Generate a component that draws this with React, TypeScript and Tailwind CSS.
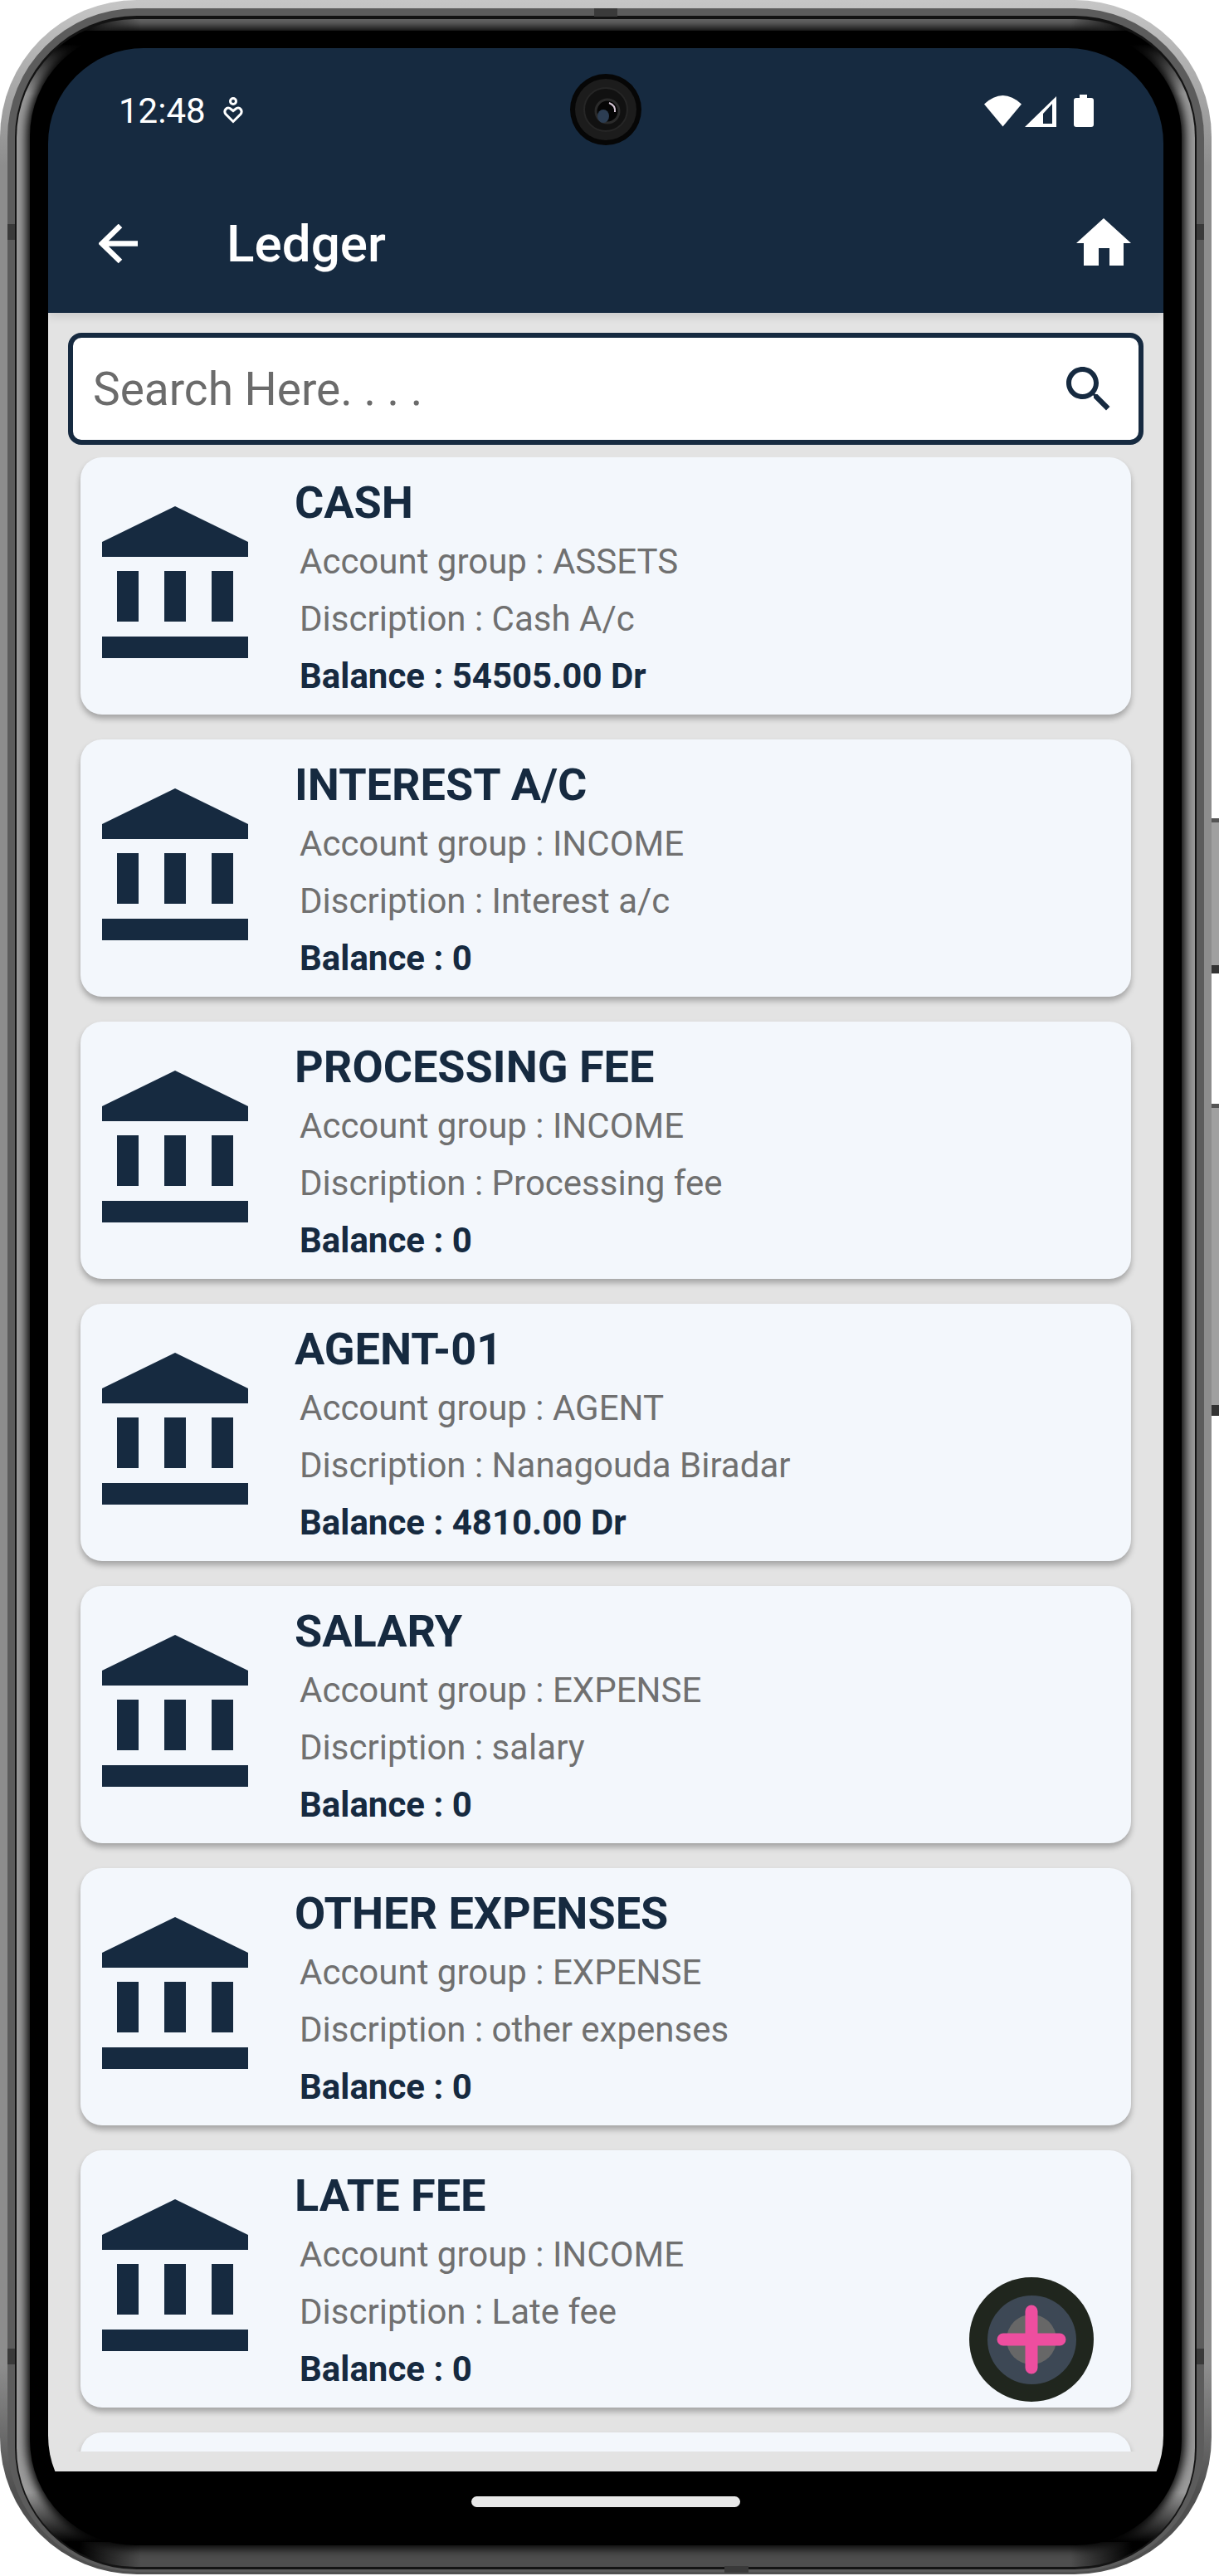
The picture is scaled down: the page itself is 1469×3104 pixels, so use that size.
const ACCOUNTS = [
  { name: 'CASH', group: 'ASSETS', description: 'Cash A/c', balance: '54505.00 Dr' },
  { name: 'INTEREST A/C', group: 'INCOME', description: 'Interest a/c', balance: '0' },
  { name: 'PROCESSING FEE', group: 'INCOME', description: 'Processing fee', balance: '0' },
  { name: 'AGENT-01', group: 'AGENT', description: 'Nanagouda Biradar', balance: '4810.00 Dr' },
  { name: 'SALARY', group: 'EXPENSE', description: 'salary', balance: '0' },
  { name: 'OTHER EXPENSES', group: 'EXPENSE', description: 'other expenses', balance: '0' },
  { name: 'LATE FEE', group: 'INCOME', description: 'Late fee', balance: '0' },
];

function BankIcon() {
  return (
    <svg width="176" height="183" viewBox="0 0 176 183" fill="#162a40">
      <path d="M88 0 176 43V61H0V43Z" />
      <rect x="18" y="78" width="26" height="61" />
      <rect x="75" y="78" width="26" height="61" />
      <rect x="132" y="78" width="26" height="61" />
      <rect x="0" y="157" width="176" height="26" />
    </svg>
  );
}

function AccountCard({ account }: { account?: (typeof ACCOUNTS)[number] }) {
  return (
    <div className="flex h-[310px] shrink-0 rounded-[26px] bg-[#f3f7fc] shadow-[0_5px_7px_rgba(0,0,0,0.28)]">
      {account && (
        <>
          <div className="w-[258px] shrink-0 pl-[26px] pt-[59px]">
            <BankIcon />
          </div>
          <div className="pt-[20px]">
            <div className="flex h-[71px] items-center pb-[2px] text-[54px] font-bold text-[#162a40]">{account.name}</div>
            <div className="flex h-[69px] items-center pl-[6px] text-[42px] text-[#707070]">Account group : {account.group}</div>
            <div className="flex h-[69px] items-center pl-[6px] text-[42px] text-[#707070]">Discription : {account.description}</div>
            <div className="flex h-[69px] items-center pl-[6px] text-[42px] font-bold text-[#162a40]">Balance : {account.balance}</div>
          </div>
        </>
      )}
    </div>
  );
}

function StatusBar() {
  return (
    <div className="flex h-[114px] items-center justify-between pl-[85px] pr-[84px] pt-[36px]">
      <div className="flex items-center gap-[21px]">
        <span className="text-[42px] text-white">12:48</span>
        <svg width="24" height="32" viewBox="0 0 24 32" fill="none" stroke="#fff" strokeWidth="3">
          <circle cx="12" cy="5" r="3.5" />
          <path d="M12 29.5 3 20.5C0 16.5 4 11.5 8 13.5L12 16.5 16 13.5C20 11.5 24 16.5 21 20.5Z" />
        </svg>
      </div>
      <div className="flex items-end gap-[4px]">
        <svg width="45" height="38" viewBox="0 0 45 38" fill="#fff">
          <path d="M0 10.5Q22.5-10.5 45 10.5L22.5 37.5Z" />
        </svg>
        <svg width="38" height="37" viewBox="0 0 38 37" fill="#fff" fillRule="evenodd" className="mr-[17px]">
          <path d="M0 37 38 0V37ZM22 21 33 9V33H22Z" />
        </svg>
        <svg width="24" height="39" viewBox="0 0 24 39" fill="#fff">
          <path d="M7 0H16V4H21Q24 4 24 7V36Q24 39 21 39H3Q0 39 0 36V7Q0 4 3 4H7Z" />
        </svg>
      </div>
    </div>
  );
}

function AppBar() {
  return (
    <div className="flex h-[205px] items-start pl-[61px] pr-[39px] pt-[76px]">
      <svg width="48" height="48" viewBox="0 0 48 48" fill="none" stroke="#fff" strokeWidth="6.5" className="mt-[22px]">
        <path d="M47 23.5H5M26 2 4 23.5 26 45" />
      </svg>
      <div className="ml-[106px] flex-1 text-[62px] font-medium leading-[92px] text-white">Ledger</div>
      <svg width="66" height="57" viewBox="0 0 66 57" fill="#fff" className="mt-[15px]">
        <path d="M33 0 66 30H57V57H40V36H27V57H9V30H0Z" />
      </svg>
    </div>
  );
}

function Camera() {
  return (
    <svg width="88" height="88" viewBox="0 0 88 88" className="absolute left-[628px] top-[30px]">
      <circle cx="44" cy="44" r="43" fill="#060606" />
      <circle cx="44" cy="44" r="37" fill="#1c1c1c" />
      <circle cx="44" cy="44" r="26" fill="#111" stroke="#262626" strokeWidth="2" />
      <circle cx="46" cy="46" r="14" fill="#050505" stroke="#2a2a2a" strokeWidth="3" />
      <ellipse cx="41" cy="52" rx="7" ry="8" fill="#2c3d52" />
      <path d="M48 36Q56 39 55 47" fill="none" stroke="#d8c8d8" strokeWidth="2" />
    </svg>
  );
}

function AddButton() {
  return (
    <div className="absolute bottom-[84px] right-[84px] flex h-[150px] w-[150px] items-center justify-center rounded-full bg-[#20261e]">
      <div className="flex h-[107px] w-[107px] items-center justify-center rounded-full bg-[#3d4855]">
        <div className="relative flex h-[60px] w-[60px] items-center justify-center rounded-full bg-[#676767]">
          <svg width="84" height="84" viewBox="0 0 84 84" className="absolute" stroke="#ee4e9f" strokeWidth="15" strokeLinecap="round">
            <path d="M42 8V76M8 42H76" />
          </svg>
        </div>
      </div>
    </div>
  );
}

function Screen() {
  return (
    <div className="relative flex h-[2992px] w-[1344px] flex-col overflow-hidden rounded-[115px] bg-black">
      <div className="relative z-10 h-[319px] shrink-0 bg-[#162a40] shadow-[0_5px_10px_rgba(0,0,0,0.1)]">
        <StatusBar />
        <AppBar />
      </div>
      <div className="absolute inset-x-0 top-0 z-20">
        <Camera />
      </div>
      <div className="relative flex h-[2601px] shrink-0 flex-col bg-[#e3e3e3]">
        <div className="mx-[24px] mt-[24px] flex h-[135px] shrink-0 items-center justify-between rounded-[16px] border-[6px] border-[#162a40] bg-white pl-[24px] pr-[24px]">
          <span className="pt-[2px] text-[55px] text-[#6b6b6b]">Search Here. . . .</span>
          <svg width="72" height="72" viewBox="0 0 24 24" fill="#162a40">
            <path d="M15.5 14h-.79l-.28-.27C15.41 12.59 16 11.11 16 9.5 16 5.91 13.09 3 9.5 3S3 5.91 3 9.5 5.91 16 9.5 16c1.61 0 3.09-.59 4.23-1.57l.27.28v.79l5 4.99L20.49 19l-4.99-5zm-6 0C7.01 14 5 11.99 5 9.5S7.01 5 9.5 5 14 7.01 14 9.5 11.99 14 9.5 14z" />
          </svg>
        </div>
        <div className="mb-[24px] mt-[15px] flex flex-1 flex-col gap-[30px] overflow-hidden px-[39px]">
          {ACCOUNTS.map((account) => (
            <AccountCard key={account.name} account={account} />
          ))}
          <AccountCard />
        </div>
        <AddButton />
      </div>
      <div className="flex flex-1 justify-center pt-[30px]">
        <div className="h-[13px] w-[324px] rounded-full bg-[#e8e8e8]" />
      </div>
    </div>
  );
}

function Antenna({ className }: { className: string }) {
  return <div className={`absolute bg-[#3a3a3a] ${className}`} />;
}

export default function App() {
  return (
    <div className="flex h-[3104px] w-[1469px] overflow-hidden bg-white [font-family:Roboto,sans-serif]">
      <div className="relative h-[3102px] w-[1460px] shrink-0 rounded-[165px] bg-[linear-gradient(180deg,#c6c6c6_0px,#8d8d8d_200px,#8d8d8d_2850px,#505050_3000px)] px-[9px] pb-[3px] pt-[10px]">
        <div className="h-full rounded-[156px] bg-[#5c5c5c] px-[9px] pb-[3px] pt-[9px]">
          <div className="h-full rounded-[147px] bg-[#141414] px-[2px] pb-[3px] pt-[4px]">
            <div className="h-full rounded-[143px] px-[16px] pb-[26px] pt-[14px] [background:linear-gradient(90deg,#000_75px,#666_150px,#666_calc(100%-150px),#000_calc(100%-75px))_top/100%_14px_no-repeat,linear-gradient(90deg,#000_75px,#4e4e4e_150px,#4e4e4e_calc(100%-150px),#000_calc(100%-75px))_bottom/100%_30px_no-repeat,linear-gradient(180deg,#000_30px,#9a9a9a_90px,#9a9a9a_calc(100%-90px),#000_calc(100%-30px))]">
              <div className="flex h-full justify-center rounded-[127px] bg-black pt-[21px] shadow-[0_0_12px_4px_#000]">
                <Screen />
              </div>
            </div>
          </div>
        </div>
        <Antenna className="left-[9px] top-[270px] h-[19px] w-[9px]" />
        <Antenna className="right-[9px] top-[270px] h-[19px] w-[9px]" />
        <Antenna className="left-[9px] top-[2830px] h-[19px] w-[9px]" />
        <Antenna className="right-[9px] top-[2830px] h-[19px] w-[9px]" />
        <Antenna className="left-[716px] top-[10px] h-[10px] w-[28px]" />
        <Antenna className="left-[873px] bottom-[2px] h-[8px] w-[29px]" />
      </div>
      <div className="flex w-[9px] shrink-0 flex-col">
        <div className="mt-[986px] h-[187px] border-b-[10px] border-t-[5px] border-b-[#333] border-t-[#555] bg-[#a0a0a0]" />
        <div className="mt-[157px] h-[376px] border-b-[13px] border-t-[5px] border-b-[#333] border-t-[#555] bg-[#a0a0a0]" />
      </div>
    </div>
  );
}
